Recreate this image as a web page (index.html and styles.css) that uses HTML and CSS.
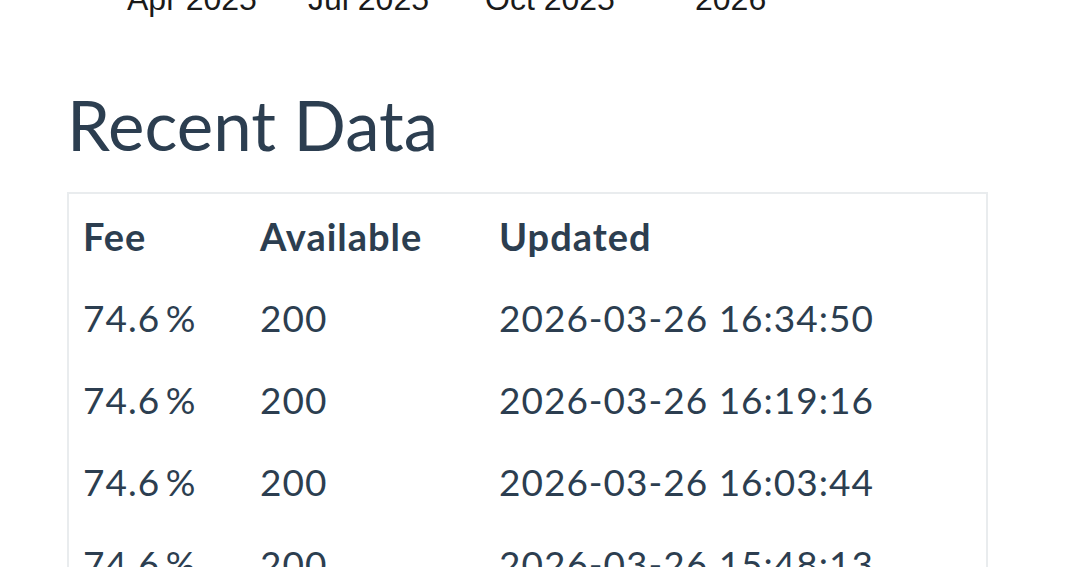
FILE: index.html
```html
<!DOCTYPE html>
<html>
<head>
<meta charset="utf-8">
<link rel="stylesheet" href="styles.css">
</head>
<body>
<div class="chart-axis">
  <span class="tick" style="left:127px">Apr 2025</span>
  <span class="tick" style="left:308px">Jul 2025</span>
  <span class="tick" style="left:485px">Oct 2025</span>
  <span class="tick" style="left:695px">2026</span>
</div>
<main class="content">
  <h2 class="title">Recent Data</h2>
  <table class="data-table">
    <thead>
      <tr><th class="col-fee">Fee</th><th class="col-avail">Available</th><th>Updated</th></tr>
    </thead>
    <tbody>
      <tr><td>74.6&#8201;%</td><td>200</td><td>2026-03-26 16:34:50</td></tr>
      <tr><td>74.6&#8201;%</td><td>200</td><td>2026-03-26 16:19:16</td></tr>
      <tr><td>74.6&#8201;%</td><td>200</td><td>2026-03-26 16:03:44</td></tr>
      <tr><td>74.6&#8201;%</td><td>200</td><td>2026-03-26 15:48:13</td></tr>
    </tbody>
  </table>
</main>
</body>
</html>
```
FILE: styles.css
```css
html, body {
  margin: 0;
  padding: 0;
  background: #ffffff;
  overflow: hidden;
}
body {
  font-family: Lato, "Noto Sans", sans-serif;
  color: #2c3e50;
}
.chart-axis {
  position: relative;
  height: 12px;
}
.tick {
  position: absolute;
  top: -17px;
  font-family: "Liberation Sans", Arial, sans-serif;
  font-size: 32px;
  line-height: 32px;
  color: #1a1a1a;
  white-space: nowrap;
}
.content {
  padding: 72px 0 0 67px;
  width: 921px;
}
.title {
  margin: 0 0 25px 0;
  font-size: 69px;
  font-weight: 400;
  line-height: 1.2;
  color: #2c3e50;
}
.data-table {
  width: 100%;
  border-collapse: collapse;
  border: 2px solid #e9ecee;
  font-size: 37px;
  line-height: 54px;
  letter-spacing: 1px;
}
.data-table th, .data-table td {
  text-align: left;
  padding: 15px 14px 13px 14px;
  white-space: nowrap;
}
.data-table th {
  font-weight: 700;
  font-size: 38px;
  letter-spacing: 1px;
}
.col-fee { width: 149px; }
.col-avail { width: 211px; }
```
